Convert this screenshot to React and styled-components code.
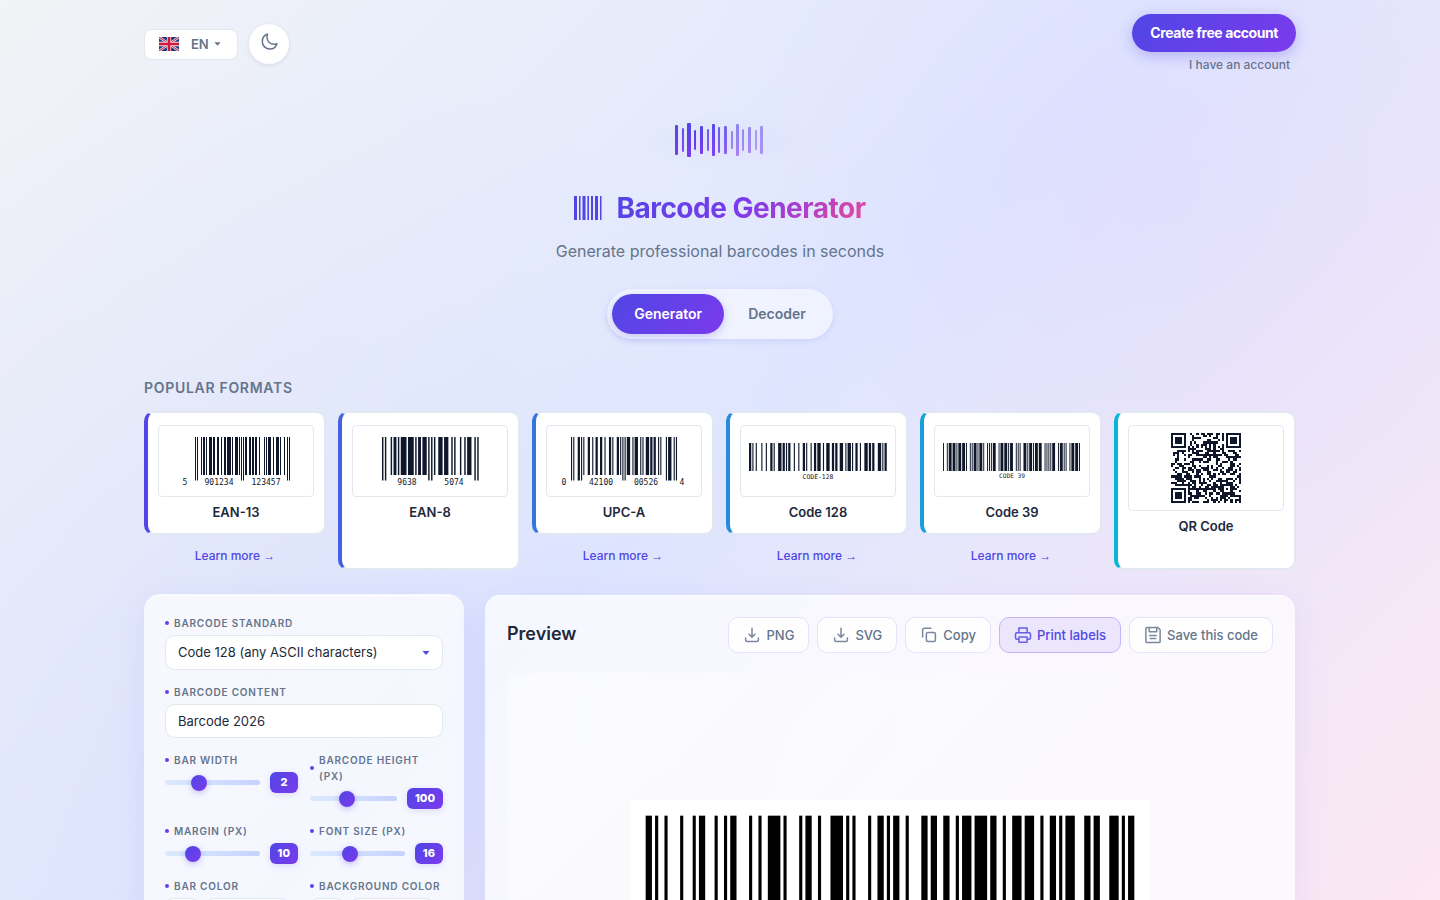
import { useState } from 'react';
import styled, { createGlobalStyle, css } from 'styled-components';

const GlobalStyle = createGlobalStyle`
  * { box-sizing: border-box; }
  body {
    margin: 0;
    min-height: 100vh;
    font-family: Inter, "Liberation Sans", sans-serif;
    color: #1e293b;
    background:
      radial-gradient(circle at 80% 20%, rgba(167, 100, 250, 0.06) 0%, transparent 35%),
      radial-gradient(circle at 20% 80%, rgba(79, 70, 229, 0.04) 0%, transparent 50%),
      linear-gradient(135deg, #f1f3f6 0%, #e0e7ff 50%, #fce7f3 100%);
    background-attachment: fixed;
  }
  button, input, select { font-family: inherit; }
`;

const brand = 'linear-gradient(135deg, #4f46e5, #7c3aed)';

/* ---------- barcode encoders ---------- */

const C128 = (
  '212222,222122,222221,121223,121322,131222,122213,122312,132212,221213,' +
  '221312,231212,112232,122132,122231,113222,123122,123221,223211,221132,' +
  '221231,213212,223112,312131,311222,321122,321221,312212,322112,322211,' +
  '212123,212321,232121,111323,131123,131321,112313,132113,132311,211313,' +
  '231113,231311,112133,112331,132131,113123,113321,133121,313121,211331,' +
  '231131,213113,213311,213131,311123,311321,331121,312113,312311,332111,' +
  '314111,221411,431111,111224,111422,121124,121421,141122,141221,112214,' +
  '112412,122114,122411,142112,142211,241211,221114,413111,241112,134111,' +
  '111242,121142,121241,114212,124112,124211,411212,421112,421211,212141,' +
  '214121,412121,111143,111341,131141,114113,114311,411113,411311,113141,' +
  '114131,311141,411131,211412,211214,211232,2331112'
).split(',');

const runs = (pattern) =>
  [...pattern].map((n, i) => (i % 2 ? '0' : '1').repeat(Number(n))).join('');

// text goes in set B, the optional digit pairs in set C
const code128 = (text, digits = '') => {
  const codes = [104, ...[...text].map((c) => c.charCodeAt(0) - 32)];
  if (digits) codes.push(99, ...digits.match(/../g).map(Number));
  const sum = codes.reduce((a, c, i) => a + c * Math.max(i, 1), 0) % 103;
  return [...codes, sum, 106].map((c) => runs(C128[c])).join('');
};

const C39 = {
  '3': 'wnwwnnnnn', '9': 'nnwwnnwnn', C: 'wnwnnwnnn', D: 'nnnnwwnnw',
  E: 'wnnnwwnnn', O: 'wnnnwnnwn', ' ': 'nwwnnnwnn', '*': 'nwnnwnwnn',
};
const code39 = (text) =>
  [...`*${text}*`]
    .map((c) => runs(C39[c].replace(/w/g, '3').replace(/n/g, '1')))
    .join('0');

const L = ['0001101', '0011001', '0010011', '0111101', '0100011', '0110001', '0101111', '0111011', '0110111', '0001011'];
const R = L.map((s) => s.replace(/./g, (b) => (b === '1' ? '0' : '1')));
const G = R.map((s) => [...s].reverse().join(''));
const sets = { L, R, G };
const ean = (left, right, parity) =>
  '101' + [...left].map((d, i) => sets[parity[i]][d]).join('') +
  '01010' + [...right].map((d) => R[d]).join('') + '101';

const inRanges = (i, ranges) => ranges.some(([a, b]) => i >= a && i < b);

const Bars = ({ bits, x, y, unit, height, tall = [], tallHeight = height, fill = '#0f172a' }) => {
  const rects = [];
  for (let i = 0; i < bits.length; ) {
    let j = i + 1;
    while (j < bits.length && bits[j] === bits[i]) j += 1;
    if (bits[i] === '1') {
      rects.push(
        <rect
          key={i}
          x={x + i * unit}
          y={y}
          width={(j - i) * unit}
          height={inRanges(i, tall) ? tallHeight : height}
          fill={fill}
        />
      );
    }
    i = j;
  }
  return <g>{rects}</g>;
};

/* ---------- QR sample ---------- */

const N = 33;
const finder = (r, c) => {
  const d = Math.max(Math.abs(r - 3), Math.abs(c - 3));
  return d === 3 || d <= 1;
};
const qrModules = () => {
  const out = [];
  let seed = 2026;
  for (let r = 0; r < N; r += 1) {
    for (let c = 0; c < N; c += 1) {
      seed = (seed * 1103515245 + 12345) % 2147483648;
      let on = (seed >> 16) % 100 < 50;
      const top = r < 8, left = c < 8, right = c > N - 9, bottom = r > N - 9;
      if (top && left) on = r < 7 && c < 7 && finder(r, c);
      else if (top && right) on = r < 7 && c > N - 8 && finder(r, N - 1 - c);
      else if (bottom && left) on = r > N - 8 && c < 7 && finder(N - 1 - r, c);
      else if (r === 6) on = c % 2 === 0;
      else if (c === 6) on = r % 2 === 0;
      else if (Math.max(Math.abs(r - 26), Math.abs(c - 26)) <= 2) {
        on = Math.max(Math.abs(r - 26), Math.abs(c - 26)) !== 1;
      }
      if (on) out.push([r, c]);
    }
  }
  return out;
};

const QrArt = () => (
  <svg viewBox="0 0 154 84" width="100%" role="img" aria-label="QR sample">
    <g transform="translate(42 7) scale(2.1212)" shapeRendering="crispEdges">
      {qrModules().map(([r, c]) => (
        <rect key={`${r}-${c}`} x={c} y={r} width="1" height="1" fill="#0f172a" />
      ))}
    </g>
  </svg>
);

const LinearArt = ({ labels, size = 8, ...bars }) => (
  <svg viewBox="0 0 154 70" width="100%" role="img" aria-label="Barcode sample">
    <Bars {...bars} />
    {labels.map(([text, x, y]) => (
      <text
        key={text + x}
        x={x}
        y={y}
        fontSize={size}
        fontWeight="400"
        textAnchor="middle"
        fontFamily="DejaVu Sans Mono, monospace"
        fill="#0f172a"
      >
        {text}
      </text>
    ))}
  </svg>
);

const formats = [
  {
    name: 'EAN-13', color: '#4f46e5', link: true,
    art: {
      bits: ean('901234', '123457', 'LGGLLG'), x: 36, y: 11, unit: 1, height: 38, tallHeight: 43.5,
      tall: [[0, 3], [45, 50], [92, 95]],
      labels: [['5', 26, 59], ['901234', 60, 59], ['123457', 107, 59]],
    },
  },
  {
    name: 'EAN-8', color: '#4361e0',
    art: {
      bits: ean('9638', '5074', 'LLLL'), x: 29, y: 11, unit: 1.443, height: 38, tallHeight: 43.5,
      tall: [[0, 3], [31, 36], [64, 67]],
      labels: [['9638', 54, 59], ['5074', 101, 59]],
    },
  },
  {
    name: 'UPC-A', color: '#3574df', link: true,
    art: {
      bits: ean('042100', '005264', 'LLLLLL'), x: 24, y: 11, unit: 1.116, height: 38, tallHeight: 43.5,
      tall: [[0, 10], [45, 50], [85, 95]],
      labels: [['0', 17, 59], ['42100', 54, 59], ['00526', 99, 59], ['4', 135, 59]],
    },
  },
  {
    name: 'Code 128', color: '#278bdc', link: true,
    art: {
      bits: code128('CODE-128'), x: 8, y: 17, unit: 1.12, height: 28, size: 6.4,
      labels: [['CODE-128', 77, 53]],
    },
  },
  {
    name: 'Code 39', color: '#169fd8', link: true,
    art: {
      bits: code39('CODE 39'), x: 8, y: 17, unit: 0.958, height: 28, size: 6.2,
      labels: [['CODE 39', 77, 52]],
    },
  },
  { name: 'QR Code', color: '#06b6d4' },
];

/* ---------- header ---------- */

const Container = styled.div`
  max-width: 1200px;
  margin: 0 auto;
  padding: 14px 24px 40px;
`;

const TopBar = styled.header`
  display: flex;
  justify-content: space-between;
  align-items: flex-start;
`;

const Prefs = styled.div`
  display: flex;
  align-items: center;
  gap: 11px;
  padding-top: 10px;
`;

const LangBox = styled.label`
  display: flex;
  align-items: center;
  height: 31px;
  padding: 0 16px 0 14px;
  color: #64748b;
  background: #fff;
  border: 1px solid #e2e8f0;
  border-radius: 8px;
`;

const LangSelect = styled.select`
  appearance: none;
  margin: 0 5px 0 12px;
  padding: 0;
  border: 0;
  background: transparent;
  color: inherit;
  font-size: 13px;
  font-weight: 600;
`;

const ThemeButton = styled.button`
  display: grid;
  place-items: center;
  width: 40px;
  height: 40px;
  padding: 0 0 4px;
  border: 0;
  border-radius: 50%;
  background: #fff;
  color: #64748b;
  box-shadow: 0 1px 4px rgba(15, 23, 42, 0.1);
`;

const Account = styled.div`
  display: flex;
  flex-direction: column;
  align-items: flex-end;
  gap: 4px;
`;

const CreateButton = styled.button`
  height: 38px;
  padding: 0 18px 1px;
  border: 0;
  border-radius: 19px;
  background: ${brand};
  color: #fff;
  font-size: 14px;
  font-weight: 700;
  letter-spacing: -0.03em;
  box-shadow: 0 4px 14px rgba(79, 70, 229, 0.3);
`;

const AccountLink = styled.a`
  padding: 0 6px;
  color: #64748b;
  font-size: 12px;
  font-weight: 500;
  line-height: 18px;
  text-decoration: none;
`;

const Hero = styled.section`
  display: flex;
  flex-direction: column;
  align-items: center;
  padding-top: 36px;
`;

const Glow = styled.div`
  display: grid;
  place-items: center;
  width: 200px;
  height: 60px;
  background: radial-gradient(closest-side, rgba(79, 70, 229, 0.04), transparent);
`;

const Title = styled.h1`
  display: flex;
  align-items: center;
  gap: 14px;
  margin: 20px 0 0;
  font-size: 28px;
  line-height: 36px;
  font-weight: 700;
  letter-spacing: -0.5px;
`;

const TitleText = styled.span`
  background: linear-gradient(135deg, #4f46e5 0%, #7c3aed 50%, #ec4899 100%);
  background-clip: text;
  color: transparent;
`;

const Subtitle = styled.p`
  margin: 13px 0 0;
  color: #64748b;
  font-size: 16px;
  line-height: 24px;
`;

const Tabs = styled.div`
  display: flex;
  gap: 2px;
  margin-top: 26px;
  padding: 5px;
  border-radius: 25px;
  background: rgba(255, 255, 255, 0.5);
  box-shadow: 0 2px 6px rgba(79, 70, 229, 0.12);
`;

const Tab = styled.button`
  height: 40px;
  padding: 0 22px 1px;
  border: 0;
  border-radius: 20px;
  background: transparent;
  color: #64748b;
  font-size: 14px;
  font-weight: 600;
  ${(p) => p.$active && css`
    background: ${brand};
    color: #fff;
    box-shadow: 0 3px 8px rgba(79, 70, 229, 0.25);
  `}
`;

/* ---------- formats ---------- */

const SectionTitle = styled.h2`
  margin: 39px 0 0;
  color: #64748b;
  font-size: 14px;
  line-height: 20px;
  font-weight: 600;
  letter-spacing: 0.05em;
  text-transform: uppercase;
`;

const FormatGrid = styled.div`
  display: grid;
  grid-template-columns: repeat(6, 1fr);
  gap: 12px;
  margin-top: 13px;
`;

const FormatCell = styled.div`
  display: flex;
  flex-direction: column;
`;

const FormatCard = styled.button`
  display: flex;
  flex: 1;
  flex-direction: column;
  align-items: stretch;
  justify-content: flex-start;
  padding: 12px 10px;
  border: 2px solid #e2e8f0;
  border-left: 4px solid ${(p) => p.$color};
  border-radius: 10px;
  background: #fff;
  color: #1e293b;
  font-size: 13px;
  font-weight: 600;
  line-height: 18px;
  text-align: center;
`;

const Sample = styled.span`
  display: grid;
  margin-bottom: 6px;
  border: 1px solid #e2e8f0;
  border-radius: 4px;
`;

const LearnMore = styled.a`
  padding: 12px 0 5px;
  color: #4f46e5;
  font-size: 12px;
  font-weight: 500;
  line-height: 18px;
  text-align: center;
  text-decoration: none;
`;

const Arrow = styled.span`
  font-family: "Liberation Sans", sans-serif;
`;

/* ---------- workspace ---------- */

const Workspace = styled.main`
  display: grid;
  grid-template-columns: 320px minmax(0, 1fr);
  gap: 20px;
  margin-top: 24px;
`;

const Panel = styled.section`
  padding: ${(p) => p.$pad};
  border: 1px solid ${(p) => p.$edge};
  border-radius: 16px;
  background: rgba(255, 255, 255, 0.72) padding-box;
  box-shadow: 0 8px 32px rgba(79, 70, 229, 0.08), inset 0 1px 0 rgba(255, 255, 255, 0.8);
`;

const Fields = styled.form`
  display: grid;
  grid-template-columns: 1fr 1fr;
  gap: 14px 12px;
`;

const Field = styled.div`
  display: flex;
  flex-direction: column;
  gap: 4px;
  min-width: 0;
  grid-column: ${(p) => (p.$wide ? '1 / -1' : 'auto')};
`;

const Label = styled.label`
  display: flex;
  align-items: center;
  gap: 5px;
  color: #64748b;
  font-size: 10px;
  font-weight: 600;
  line-height: 16px;
  letter-spacing: 0.08em;
  text-transform: uppercase;

  &::before {
    content: "";
    flex: none;
    width: 4px;
    height: 4px;
    border-radius: 50%;
    background: ${brand};
  }
`;

const control = css`
  width: 100%;
  padding: 0 12px;
  border: 1px solid #e2e8f0;
  border-radius: 10px;
  background: #fff;
  color: #1e293b;
  font-size: 13px;
`;

const SelectWrap = styled.div`
  display: grid;
  align-items: center;

  & > * { grid-area: 1 / 1; }
  & > svg { justify-self: end; margin-right: 13px; pointer-events: none; }
`;

const Select = styled.select`
  ${control}
  height: 35px;
  padding-bottom: 2px;
  appearance: none;
`;

const TextInput = styled.input`
  ${control}
  height: 34px;
`;

const RangeRow = styled.div`
  display: flex;
  align-items: center;
  gap: 10px;
`;

const thumb = css`
  width: 16px;
  height: 16px;
  border: 0;
  border-radius: 50%;
  background: ${brand};
  box-shadow: 0 2px 6px rgba(79, 70, 229, 0.3);
`;

const Range = styled.input`
  appearance: none;
  flex: 1;
  min-width: 0;
  height: 5px;
  margin: 0;
  border-radius: 3px;
  background: linear-gradient(90deg, #dbeafe, #c7d2fe);

  &::-webkit-slider-thumb { appearance: none; ${thumb} }
  &::-moz-range-thumb { ${thumb} }
`;

const Badge = styled.output`
  min-width: 28px;
  padding: 0 8px;
  border-radius: 6px;
  background: ${brand};
  color: #fff;
  font-size: 11px;
  font-weight: 800;
  line-height: 21px;
  text-align: center;
  box-shadow: 0 2px 6px rgba(79, 70, 229, 0.15);
`;

const ColorRow = styled.div`
  display: flex;
  gap: 5px;
`;

const Swatch = styled.input`
  width: 34px;
  height: 34px;
  padding: 3px;
  border: 1px solid #e2e8f0;
  border-radius: 8px;
  background: #fff;
`;

const HexInput = styled(TextInput)`
  width: 86px;
`;

const PreviewHead = styled.div`
  display: flex;
  align-items: center;
  justify-content: space-between;
`;

const PreviewTitle = styled.h2`
  margin: 0;
  padding-bottom: 2px;
  font-size: 18px;
  line-height: 24px;
  font-weight: 600;
`;

const Actions = styled.div`
  display: flex;
  gap: 8px;
`;

const Action = styled.button`
  display: flex;
  align-items: center;
  gap: 5px;
  height: 36px;
  padding: 0 14px;
  border: 1px solid ${(p) => (p.$active ? '#c4b5fd' : '#e6e2fb')};
  border-radius: 10px;
  background: ${(p) => (p.$active ? '#ebe6fc' : 'rgba(255, 255, 255, 0.8)')};
  color: ${(p) => (p.$active ? '#4f46e5' : '#64748b')};
  font-size: 13px;
  font-weight: 500;

  & > svg { opacity: 0.85; }
`;

const Stage = styled.div`
  display: grid;
  place-items: center;
  min-height: 470px;
  margin-top: 20px;
  border-radius: 12px;
  background: linear-gradient(135deg, rgba(255, 255, 255, 0.45), rgba(246, 245, 253, 0.4));
`;

const Output = styled.svg`
  width: 68%;
  max-width: 520px;
  background: #fff;
`;

/* ---------- icons ---------- */

const Caret = ({ color = 'currentColor', width = 7 }) => (
  <svg width={width} height="4" viewBox="0 0 8 4" aria-hidden="true">
    <path d="M0.5 0h7L4 4z" fill={color} />
  </svg>
);

const Flag = () => (
  <svg width="20" height="14" viewBox="0 0 60 42" aria-hidden="true">
    <rect width="60" height="42" rx="2" fill="#1f3b7c" />
    <path d="M0 0l60 42M60 0L0 42" stroke="#dfe3ee" strokeWidth="7" />
    <path d="M0 0l60 42M60 0L0 42" stroke="#d0183a" strokeWidth="3" />
    <path d="M30 0v42M0 21h60" stroke="#f3dfe5" strokeWidth="13" />
    <path d="M30 0v42M0 21h60" stroke="#d0183a" strokeWidth="8" />
  </svg>
);

const Icon = ({ size = 18, stroke = 2, children }) => (
  <svg
    width={size}
    height={size}
    viewBox="0 0 24 24"
    fill="none"
    stroke="currentColor"
    strokeWidth={stroke}
    strokeLinecap="round"
    strokeLinejoin="round"
    aria-hidden="true"
  >
    {children}
  </svg>
);

const Moon = () => (
  <Icon size={20} stroke={1.8}>
    <path d="M21.5 14a8.6 8.6 0 0 1-3.5.7c-4.8 0-8.400-3.900-8.400-8.400 0-1.400.2-2.600.7-3.800A9.300 9.300 0 0 0 4 11.300c0 5.200 4 9.200 9 9.200 3.900 0 7.200-2.600 8.500-6.500z" />
  </Icon>
);

const Download = () => (
  <Icon>
    <path d="M12 3v12M8 11l4 4 4-4M3.500 16v2.500a2 2 0 0 0 2 2h13a2 2 0 0 0 2-2V16" />
  </Icon>
);

const CopyIcon = () => (
  <Icon>
    <rect x="8.500" y="8.500" width="12" height="12" rx="2" />
    <path d="M3.500 14.500V5a2 2 0 0 1 2-2H14.500" />
  </Icon>
);

const Printer = () => (
  <Icon>
    <path d="M6.500 9V2.500h11V9M6 17.500H4a2 2 0 0 1-2-2V11a2 2 0 0 1 2-2h16a2 2 0 0 1 2 2v4.500a2 2 0 0 1-2 2h-2" />
    <rect x="6.500" y="14.500" width="11" height="7" rx="0.500" />
  </Icon>
);

const Save = () => (
  <Icon>
    <path d="M2.500 3.500a1.500 1.500 0 0 1 1.500-1.500h14.500l3 3v15.500a1.500 1.500 0 0 1-1.500 1.500h-16a1.500 1.500 0 0 1-1.500-1.500z" />
    <path d="M7 2.500v5h10v-5M8.500 16.500h7M7.500 12.500h9" />
  </Icon>
);

// x, width, top, height, opacity
const logoBars = [
  [0, 3, 2, 30, 1], [7, 2, 5, 24, 0.9], [12, 4, 0, 34, 1], [19, 2, 7, 20, 1],
  [25, 3, 3, 28, 1], [32, 2, 6, 22, 0.85], [37, 3, 1, 32, 0.95], [43, 2, 4, 26, 0.85],
  [49, 3, 3, 28, 0.8], [56, 2, 8, 18, 0.6], [61, 3, 1, 32, 0.6], [67, 2, 6, 22, 0.55],
  [73, 3, 4, 26, 0.55], [80, 2, 7, 20, 0.45], [85, 3, 3, 28, 0.5],
];

const Logo = () => (
  <svg width="90" height="34" viewBox="0 0 90 34" aria-hidden="true">
    <defs>
      <linearGradient id="logo" x1="0" y1="0" x2="0" y2="1">
        <stop offset="0" stopColor="#4f46e5" />
        <stop offset="1" stopColor="#7c3aed" />
      </linearGradient>
    </defs>
    {logoBars.map(([x, w, y, h, o]) => (
      <rect key={x} x={x} y={y} width={w} height={h} rx="1" opacity={o} fill="url(#logo)" />
    ))}
  </svg>
);

// x, width, opacity
const titleBars = [
  [0, 3, 1], [5, 1, 1], [6, 1, 0.5], [8.5, 3, 1], [13, 1, 0.6], [14, 1, 1],
  [17, 2, 1], [21, 3, 1], [26, 1, 1], [27, 1, 0.5],
];

const TitleIcon = () => (
  <svg width="28" height="24" viewBox="0 0 28 24" fill="#4f46e5" aria-hidden="true">
    {titleBars.map(([x, w, o]) => (
      <rect key={x} x={x} width={w} height="24" opacity={o} />
    ))}
  </svg>
);

const ranges = [
  { id: 'bar-width', label: 'Bar width', min: 1, max: 4, value: 2 },
  { id: 'bar-height', label: 'Barcode height (px)', min: 30, max: 200, value: 100 },
  { id: 'margin', label: 'Margin (px)', min: 0, max: 40, value: 10 },
  { id: 'font-size', label: 'Font size (px)', min: 8, max: 28, value: 16 },
];

const RangeField = ({ id, label, min, max, value }) => {
  const [current, setCurrent] = useState(value);
  return (
    <Field>
      <Label htmlFor={id}>{label}</Label>
      <RangeRow>
        <Range
          id={id}
          type="range"
          min={min}
          max={max}
          value={current}
          onChange={(e) => setCurrent(Number(e.target.value))}
        />
        <Badge htmlFor={id}>{current}</Badge>
      </RangeRow>
    </Field>
  );
};

const ColorField = ({ id, label, value }) => (
  <Field>
    <Label htmlFor={id}>{label}</Label>
    <ColorRow>
      <Swatch id={id} type="color" defaultValue={value} />
      <HexInput aria-label={`${label} hex`} defaultValue={value} />
    </ColorRow>
  </Field>
);

const App = () => {
  const [tab, setTab] = useState('Generator');

  return (
    <>
      <GlobalStyle />
      <Container>
        <TopBar>
          <Prefs>
            <LangBox>
              <Flag />
              <LangSelect aria-label="Language">
                <option>EN</option>
              </LangSelect>
              <Caret />
            </LangBox>
            <ThemeButton aria-label="Dark mode">
              <Moon />
            </ThemeButton>
          </Prefs>
          <Account>
            <CreateButton>Create free account</CreateButton>
            <AccountLink href="#login">I have an account</AccountLink>
          </Account>
        </TopBar>

        <Hero>
          <Glow>
            <Logo />
          </Glow>
          <Title>
            <TitleIcon />
            <TitleText>Barcode Generator</TitleText>
          </Title>
          <Subtitle>Generate professional barcodes in seconds</Subtitle>
          <Tabs role="tablist">
            {['Generator', 'Decoder'].map((name) => (
              <Tab
                key={name}
                role="tab"
                aria-selected={tab === name}
                $active={tab === name}
                onClick={() => setTab(name)}
              >
                {name}
              </Tab>
            ))}
          </Tabs>
        </Hero>

        <SectionTitle>Popular formats</SectionTitle>
        <FormatGrid>
          {formats.map((f) => (
            <FormatCell key={f.name}>
              <FormatCard $color={f.color}>
                <Sample>{f.art ? <LinearArt {...f.art} /> : <QrArt />}</Sample>
                {f.name}
              </FormatCard>
              {f.link && (
                <LearnMore href="#learn">
                  Learn more <Arrow>→</Arrow>
                </LearnMore>
              )}
            </FormatCell>
          ))}
        </FormatGrid>

        <Workspace>
          <Panel $pad="20px" $edge="rgba(255, 255, 255, 0.7)">
            <Fields>
              <Field $wide>
                <Label htmlFor="standard">Barcode standard</Label>
                <SelectWrap>
                  <Select id="standard">
                    <option>Code 128 (any ASCII characters)</option>
                  </Select>
                  <Caret color="#4f46e5" width={8} />
                </SelectWrap>
              </Field>
              <Field $wide>
                <Label htmlFor="content">Barcode content</Label>
                <TextInput id="content" defaultValue="Barcode 2026" />
              </Field>
              {ranges.map((r) => (
                <RangeField key={r.id} {...r} />
              ))}
              <ColorField id="bar-color" label="Bar color" value="#000000" />
              <ColorField id="bg-color" label="Background color" value="#ffffff" />
            </Fields>
          </Panel>

          <Panel $pad="22px" $edge="rgba(124, 58, 237, 0.04)">
            <PreviewHead>
              <PreviewTitle>Preview</PreviewTitle>
              <Actions>
                <Action><Download />PNG</Action>
                <Action><Download />SVG</Action>
                <Action><CopyIcon />Copy</Action>
                <Action $active><Printer />Print labels</Action>
                <Action><Save />Save this code</Action>
              </Actions>
            </PreviewHead>
            <Stage>
              <Output viewBox="0 0 332 138" role="img" aria-label="Barcode 2026">
                <Bars bits={code128('Barcode ', '2026')} x={10} y={10} unit={2} height={100} fill="#000" />
                <text x="166" y="127" fontSize="16" textAnchor="middle" fontFamily="DejaVu Sans Mono, monospace">
                  Barcode 2026
                </text>
              </Output>
            </Stage>
          </Panel>
        </Workspace>
      </Container>
    </>
  );
};

export default App;
